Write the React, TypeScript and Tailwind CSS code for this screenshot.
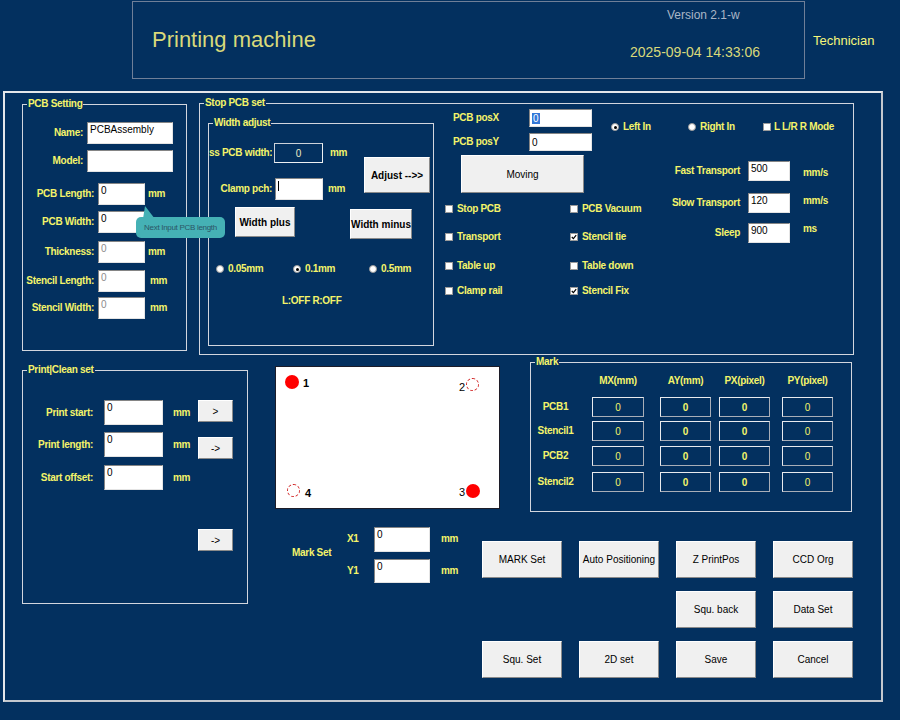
import React from "react";

const LBL =
  "text-[#f4f46a] text-[10px] font-bold tracking-[-0.3px] whitespace-nowrap leading-[12px]";

function Field({
  className = "",
  value = "",
  gray = false,
  children,
}: {
  className?: string;
  value?: string;
  gray?: boolean;
  children?: React.ReactNode;
}) {
  return (
    <div
      className={`bg-white border border-t-[#858585] border-l-[#858585] border-b-[#e4e4e4] border-r-[#e4e4e4] pl-[2px] pt-[1px] text-[10px] leading-[12px] whitespace-nowrap overflow-hidden ${
        gray ? "text-[#8c8c8c]" : "text-black"
      } ${className}`}
    >
      {children ?? value}
    </div>
  );
}

function Btn({
  className = "",
  children,
  bold = false,
}: {
  className?: string;
  children?: React.ReactNode;
  bold?: boolean;
}) {
  return (
    <div
      className={`bg-[#f0f0f0] border border-t-white border-l-white border-b-[#8a8a8a] border-r-[#8a8a8a] flex items-center justify-center text-[10px] text-black whitespace-nowrap ${
        bold ? "font-bold" : ""
      } ${className}`}
    >
      {children}
    </div>
  );
}

function Group({
  title,
  className = "",
  children,
}: {
  title: string;
  className?: string;
  children?: React.ReactNode;
}) {
  return (
    <div className={`relative border border-[#d2d6de] shrink-0 ${className}`}>
      <span className={`absolute -top-[7px] left-[4px] px-[1px] bg-[#03305f] ${LBL}`}>
        {title}
      </span>
      {children}
    </div>
  );
}

function Radio({ checked = false }: { checked?: boolean }) {
  return (
    <span className="w-[8px] h-[8px] rounded-full bg-white border border-[#9a9a9a] flex items-center justify-center shrink-0">
      {checked && <span className="w-[3px] h-[3px] rounded-full bg-black" />}
    </span>
  );
}

function Check({ checked = false }: { checked?: boolean }) {
  return (
    <span className="w-[8px] h-[8px] bg-white border border-[#9a9a9a] flex items-center justify-center shrink-0">
      {checked && (
        <svg width="6" height="6" viewBox="0 0 6 6">
          <path d="M0.8 3 L2.4 4.6 L5.2 1.2" stroke="#000" strokeWidth="1.2" fill="none" />
        </svg>
      )}
    </span>
  );
}

function CheckItem({ label, checked = false }: { label: string; checked?: boolean }) {
  return (
    <div className="w-[125px] flex items-center h-[14px] shrink-0">
      <Check checked={checked} />
      <span className={`${LBL} ml-[4px]`}>{label}</span>
    </div>
  );
}

function Cell({ className = "", bold = false }: { className?: string; bold?: boolean }) {
  return (
    <div
      className={`h-[20px] border border-[#e8eaee] border-b-[#a9aeb8] border-r-[#a9aeb8] flex items-center justify-center text-[10px] text-[#f4f46a] shrink-0 ${
        bold ? "font-bold" : ""
      } ${className}`}
    >
      0
    </div>
  );
}

function MarkRow({ label, className = "" }: { label: string; className?: string }) {
  return (
    <div className={`flex items-center ${className}`}>
      <div className={`${LBL} w-[49px] mr-[12px] text-center`}>{label}</div>
      <Cell className="w-[52px] mr-[16px]" />
      <Cell className="w-[51px] mr-[8px]" bold />
      <Cell className="w-[51px] mr-[12px]" bold />
      <Cell className="w-[51px]" />
    </div>
  );
}

export default function App() {
  return (
    <div className="w-[900px] h-[720px] bg-[#03305f] overflow-hidden relative font-['Liberation_Sans',Arial,sans-serif] pt-[1px]">
      {/* Header */}
      <div className="flex items-center h-[78px]">
        <div className="ml-[132px] w-[673px] h-[78px] border border-[#6f7f98] flex items-center">
          <div className="flex-1 pl-[19px] text-[22px] text-[#d9d97a] leading-none">
            Printing machine
          </div>
          <div className="self-start pt-[6px] mr-[44px] w-[130px] flex flex-col">
            <div className="text-[12px] leading-[14px] text-[#aab6c6] ml-[37px] whitespace-nowrap">
              Version 2.1-w
            </div>
            <div className="text-[14px] leading-[16px] text-[#d9d97a] mt-[22px] whitespace-nowrap">
              2025-09-04 14:33:06
            </div>
          </div>
        </div>
        <div className="ml-[8px] mt-[2px] text-[13px] text-[#f6f67a]">Technician</div>
      </div>

      {/* Main panel */}
      <div className="mt-[12px] ml-[3px] w-[880px] h-[611px] border-2 border-[#e4e6ea] border-b-[#c4c8ce] border-r-[#c4c8ce]">
        {/* Row 1 */}
        <div className="flex items-start">
          <Group title="PCB Setting" className="ml-[17px] mt-[11px] w-[165px] h-[247px]">
            <div className="flex flex-col">
              <div className="mt-[17px] flex items-center h-[22px]">
                <span className={`${LBL} w-[60px] text-right`}>Name:</span>
                <Field className="ml-[4px] w-[86px] h-[22px]" value="PCBAssembly" />
              </div>
              <div className="mt-[6px] flex items-center h-[22px]">
                <span className={`${LBL} w-[60px] text-right`}>Model:</span>
                <Field className="ml-[4px] w-[86px] h-[22px]" />
              </div>
              <div className="mt-[11px] flex items-center h-[22px]">
                <span className={`${LBL} w-[71px] text-right`}>PCB Length:</span>
                <Field className="ml-[4px] w-[47px] h-[22px]" value="0" />
                <span className={`${LBL} ml-[3px]`}>mm</span>
              </div>
              <div className="mt-[6px] flex items-center h-[22px]">
                <span className={`${LBL} w-[71px] text-right`}>PCB Width:</span>
                <Field className="ml-[4px] w-[47px] h-[22px]" value="0" />
              </div>
              <div className="mt-[8px] flex items-center h-[22px]">
                <span className={`${LBL} w-[71px] text-right`}>Thickness:</span>
                <Field className="ml-[4px] w-[47px] h-[22px]" value="0" gray />
                <span className={`${LBL} ml-[3px]`}>mm</span>
              </div>
              <div className="mt-[7px] flex items-center h-[22px]">
                <span className={`${LBL} w-[71px] text-right`}>Stencil Length:</span>
                <Field className="ml-[4px] w-[47px] h-[22px]" value="0" gray />
                <span className={`${LBL} ml-[5px]`}>mm</span>
              </div>
              <div className="mt-[5px] flex items-center h-[22px]">
                <span className={`${LBL} w-[71px] text-right`}>Stencil Width:</span>
                <Field className="ml-[4px] w-[47px] h-[22px]" value="0" gray />
                <span className={`${LBL} ml-[5px]`}>mm</span>
              </div>
            </div>
          </Group>

          <Group title="Stop PCB set" className="ml-[12px] mt-[10px] w-[655px] h-[252px]">
            <div className="flex items-start">
              <Group title="Width adjust" className="ml-[8px] mt-[19px] w-[226px] h-[223px]">
                <div className="flex flex-col">
                  <div className="flex items-start">
                    <div className="w-[155px] flex flex-col">
                      <div className="mt-[19px] flex items-center h-[20px]">
                        <span className={`${LBL} w-[63px] text-right overflow-hidden`}>
                          ss PCB width:
                        </span>
                        <div className="ml-[2px] w-[49px] h-[20px] border border-[#cdd2da] border-b-[#eef0f2] border-r-[#eef0f2] flex items-center justify-center text-[10px] text-[#ececc8]">
                          0
                        </div>
                        <span className={`${LBL} ml-[7px]`}>mm</span>
                      </div>
                      <div className="mt-[15px] flex items-center h-[22px]">
                        <span className={`${LBL} w-[63px] text-right`}>Clamp pch:</span>
                        <Field className="ml-[3px] w-[48px] h-[22px]">
                          <span className="block w-[1px] h-[10px] bg-black mt-[1px]" />
                        </Field>
                        <span className={`${LBL} ml-[5px]`}>mm</span>
                      </div>
                    </div>
                    <Btn className="mt-[33px] w-[66px] h-[36px]" bold>
                      Adjust --&gt;&gt;
                    </Btn>
                  </div>
                  <div className="mt-[7px] flex items-start">
                    <Btn className="ml-[26px] w-[60px] h-[30px]" bold>
                      Width plus
                    </Btn>
                    <Btn className="ml-[55px] mt-[2px] w-[62px] h-[30px]" bold>
                      Width minus
                    </Btn>
                  </div>
                  <div className="mt-[24px] ml-[7px] flex items-center h-[12px]">
                    <div className="w-[77px] flex items-center">
                      <Radio />
                      <span className={`${LBL} ml-[4px]`}>0.05mm</span>
                    </div>
                    <div className="w-[76px] flex items-center">
                      <Radio checked />
                      <span className={`${LBL} ml-[4px]`}>0.1mm</span>
                    </div>
                    <div className="flex items-center">
                      <Radio />
                      <span className={`${LBL} ml-[4px]`}>0.5mm</span>
                    </div>
                  </div>
                  <div className={`${LBL} mt-[20px] ml-[73px]`}>L:OFF R:OFF</div>
                </div>
              </Group>

              {/* Left column */}
              <div className="ml-[11px] w-[165px] flex flex-col shrink-0">
                <div className="mt-[5px] flex items-center h-[18px]">
                  <span className={`${LBL} ml-[8px] w-[76px]`}>PCB posX</span>
                  <Field className="w-[63px] h-[18px] pt-0 leading-[16px]">
                    <span className="bg-[#3378d8] text-white px-[1px]">0</span>
                  </Field>
                </div>
                <div className="mt-[6px] flex items-center h-[18px]">
                  <span className={`${LBL} ml-[8px] w-[76px]`}>PCB posY</span>
                  <Field className="w-[63px] h-[18px] pt-0 leading-[16px]" value="0" />
                </div>
                <Btn className="mt-[4px] ml-[16px] w-[123px] h-[38px]">Moving</Btn>
                <div className="mt-[9px] flex">
                  <CheckItem label="Stop PCB" />
                  <CheckItem label="PCB Vacuum" />
                </div>
                <div className="mt-[14px] flex">
                  <CheckItem label="Transport" />
                  <CheckItem label="Stencil tie" checked />
                </div>
                <div className="mt-[15px] flex">
                  <CheckItem label="Table up" />
                  <CheckItem label="Table down" />
                </div>
                <div className="mt-[11px] flex">
                  <CheckItem label="Clamp rail" />
                  <CheckItem label="Stencil Fix" checked />
                </div>
              </div>

              {/* Right column */}
              <div className="flex flex-col">
                <div className="mt-[16px] h-[14px] flex items-center">
                  <div className="w-[77px] pl-[1px] flex items-center">
                    <Radio checked />
                    <span className={`${LBL} ml-[4px]`}>Left In</span>
                  </div>
                  <div className="w-[75px] pl-[1px] flex items-center">
                    <Radio />
                    <span className={`${LBL} ml-[4px]`}>Right In</span>
                  </div>
                  <div className="pl-[1px] flex items-center">
                    <Check />
                    <span className={`${LBL} ml-[3px]`}>L L/R R Mode</span>
                  </div>
                </div>
                <div className="mt-[27px] flex items-start h-[20px]">
                  <span className={`${LBL} w-[130px] text-right leading-[20px]`}>Fast Transport</span>
                  <Field className="ml-[8px] w-[42px] h-[20px]" value="500" />
                  <span className={`${LBL} ml-[13px] mt-[6px]`}>mm/s</span>
                </div>
                <div className="mt-[12px] flex items-start h-[20px]">
                  <span className={`${LBL} w-[130px] text-right leading-[20px]`}>Slow Transport</span>
                  <Field className="ml-[8px] w-[42px] h-[20px]" value="120" />
                  <span className={`${LBL} ml-[13px] mt-[2px]`}>mm/s</span>
                </div>
                <div className="mt-[10px] flex items-start h-[20px]">
                  <span className={`${LBL} w-[130px] text-right leading-[20px]`}>Sleep</span>
                  <Field className="ml-[8px] w-[42px] h-[20px]" value="900" />
                  <span className={`${LBL} ml-[13px]`}>ms</span>
                </div>
              </div>
            </div>
          </Group>
        </div>

        {/* Row 2 */}
        <div className="flex items-start">
          <Group title="Print|Clean set" className="ml-[17px] mt-[15px] w-[226px] h-[234px]">
            <div className="flex flex-col">
              <div className="mt-[29px] flex items-start h-[25px]">
                <span className={`${LBL} w-[70px] text-right leading-[25px]`}>Print start:</span>
                <Field className="ml-[11px] w-[59px] h-[25px]" value="0" />
                <span className={`${LBL} w-[35px] pl-[10px] leading-[25px]`}>mm</span>
                <Btn className="w-[35px] h-[22px]">&gt;</Btn>
              </div>
              <div className="mt-[7px] flex items-start h-[25px]">
                <span className={`${LBL} w-[70px] text-right leading-[25px]`}>Print length:</span>
                <Field className="ml-[11px] w-[59px] h-[25px]" value="0" />
                <span className={`${LBL} w-[35px] pl-[10px] leading-[25px]`}>mm</span>
                <Btn className="w-[35px] h-[22px] mt-[5px]">-&gt;</Btn>
              </div>
              <div className="mt-[8px] flex items-start h-[25px]">
                <span className={`${LBL} w-[70px] text-right leading-[25px]`}>Start offset:</span>
                <Field className="ml-[11px] w-[59px] h-[25px]" value="0" />
                <span className={`${LBL} w-[35px] pl-[10px] leading-[25px]`}>mm</span>
              </div>
              <Btn className="mt-[39px] ml-[175px] w-[35px] h-[22px]">-&gt;</Btn>
            </div>
          </Group>

          <div className="ml-[27px] mt-[7px] w-[578px] flex flex-col shrink-0">
            <div className="flex items-start">
              {/* Canvas */}
              <div className="relative mt-[4px] w-[225px] h-[143px] bg-white border border-[#1c1c28] shrink-0">
                <span className="absolute left-[9px] top-[8px] w-[14px] h-[14px] rounded-full bg-[#ff0000]" />
                <span className="absolute left-[27px] top-[10px] text-[11px] leading-[12px] font-bold text-black">1</span>
                <span className="absolute left-[190px] top-[11px] w-[13px] h-[13px] rounded-full border border-dashed border-[#d02020]" />
                <span className="absolute left-[183px] top-[14px] text-[11px] leading-[12px] text-black">2</span>
                <span className="absolute left-[190px] top-[117px] w-[14px] h-[14px] rounded-full bg-[#ff0000]" />
                <span className="absolute left-[183px] top-[119px] text-[11px] leading-[12px] text-black">3</span>
                <span className="absolute left-[11px] top-[117px] w-[13px] h-[13px] rounded-full border border-dashed border-[#d02020]" />
                <span className="absolute left-[29px] top-[120px] text-[11px] leading-[12px] font-bold text-black">4</span>
              </div>

              {/* Mark */}
              <Group title="Mark" className="ml-[30px] w-[322px] h-[150px]">
                <div className="flex flex-col">
                  <div className="mt-[11px] h-[14px] flex items-center">
                    <div className="w-[61px]" />
                    <div className={`${LBL} w-[52px] mr-[16px] text-center`}>MX(mm)</div>
                    <div className={`${LBL} w-[51px] mr-[8px] text-center`}>AY(mm)</div>
                    <div className={`${LBL} w-[51px] mr-[12px] text-center`}>PX(pixel)</div>
                    <div className={`${LBL} w-[51px] text-center`}>PY(pixel)</div>
                  </div>
                  <MarkRow label="PCB1" className="mt-[9px]" />
                  <MarkRow label="Stencil1" className="mt-[4px]" />
                  <MarkRow label="PCB2" className="mt-[5px]" />
                  <MarkRow label="Stencil2" className="mt-[6px]" />
                </div>
              </Group>
            </div>

            <div className="flex items-start">
              {/* Mark Set */}
              <div className="w-[207px] mt-[15px] flex items-center shrink-0">
                <span className={`${LBL} ml-[17px] w-[55px] -mt-[4px]`}>Mark Set</span>
                <div className="flex flex-col">
                  <div className="flex items-center h-[25px]">
                    <span className={`${LBL} w-[27px] -mt-[2px]`}>X1</span>
                    <Field className="w-[56px] h-[25px]" value="0" />
                    <span className={`${LBL} ml-[11px] -mt-[2px]`}>mm</span>
                  </div>
                  <div className="flex items-center h-[24px] mt-[7px]">
                    <span className={`${LBL} w-[27px]`}>Y1</span>
                    <Field className="w-[56px] h-[24px]" value="0" />
                    <span className={`${LBL} ml-[11px]`}>mm</span>
                  </div>
                </div>
              </div>

              {/* Buttons */}
              <div className="mt-[29px] grid grid-cols-[80px_80px_80px_80px] auto-rows-[37px] gap-x-[17px] gap-y-[13px]">
                <Btn>MARK Set</Btn>
                <Btn>Auto Positioning</Btn>
                <Btn>Z PrintPos</Btn>
                <Btn>CCD Org</Btn>
                <div />
                <div />
                <Btn>Squ. back</Btn>
                <Btn>Data Set</Btn>
                <Btn>Squ. Set</Btn>
                <Btn>2D set</Btn>
                <Btn>Save</Btn>
                <Btn>Cancel</Btn>
              </div>
            </div>
          </div>
        </div>
      </div>

      {/* Tooltip overlay */}
      <svg className="absolute left-[140px] top-[206px]" width="16" height="13" viewBox="0 0 16 13">
        <polygon points="5,0 3,13 15,13" fill="#45b1b5" />
      </svg>
      <div className="absolute left-[136px] top-[217px] w-[89px] h-[21px] rounded-[5px] bg-[#45b1b5] flex items-center justify-center text-[8px] tracking-[-0.3px] text-[#2c5566] whitespace-nowrap">
        Next Input PCB length
      </div>
    </div>
  );
}
